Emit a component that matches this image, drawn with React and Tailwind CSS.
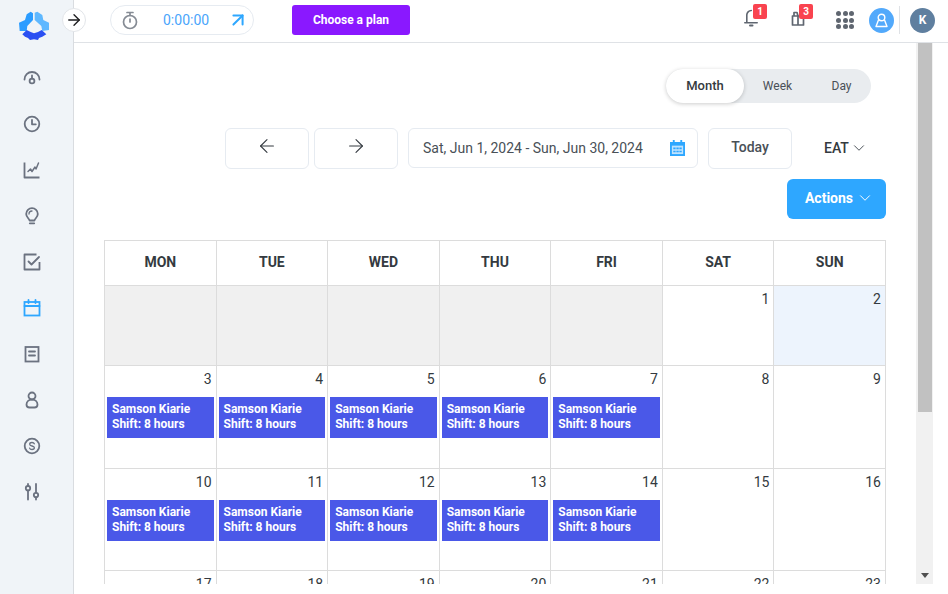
import React from "react";
import { ArrowRight, ArrowLeft, ArrowUpRight, ChevronDown } from "lucide-react";

const sideStroke = "#6b7280";

// SIDEBAR ICONS
const Svg = ({ children, color = sideStroke, size = 18 }) => (
  <svg width={size} height={size} viewBox="0 0 18 18" fill="none" stroke={color} strokeWidth="1.8" strokeLinecap="round" strokeLinejoin="round">
    {children}
  </svg>
);

const sideIcons = [
  <Svg key="gauge">
    <path d="M1.5 10.500A7.500 7.500 0 0 1 16.500 10.500" />
    <path d="M9 6.500v3" />
    <circle cx="9" cy="12" r="2.400" />
  </Svg>,
  <Svg key="clock">
    <circle cx="9" cy="9" r="7.300" />
    <path d="M9 5v4.300h3.800" />
  </Svg>,
  <Svg key="chart">
    <path d="M1.500 1.500v15h15" strokeLinecap="butt" />
    <path d="M5 10.500l2.500-2.500 1.500 2.500 3-4.500 1 2L15.500 2" strokeWidth="1.500" />
  </Svg>,
  <Svg key="bulb">
    <path d="M6.500 13.500C6.300 11.500 3.200 10.500 3.200 7a5.800 5.800 0 0 1 11.600 0c0 3.500-3.100 4.500-3.300 6.500z" />
    <path d="M6.800 16.300h4.400" />
    <path d="M6 7a3 3 0 0 1 3-3" strokeWidth="1.300" />
  </Svg>,
  <Svg key="check">
    <path d="M16.500 9v7.500H1.500V1.500h12" strokeLinecap="butt" />
    <path d="M5.500 8.500l3 3L16 4" />
  </Svg>,
  <Svg key="cal" color="#2ea7ff">
    <rect x="1.500" y="3" width="15" height="13.500" strokeLinejoin="miter" />
    <path d="M1.500 7h15M5.500 1v3M12.500 1v3" />
  </Svg>,
  <Svg key="doc">
    <rect x="2.500" y="2" width="13" height="14.500" strokeLinejoin="miter" />
    <path d="M6 6.500h6M6 10.500h6" />
  </Svg>,
  <Svg key="user">
    <circle cx="9" cy="5" r="3.500" />
    <path d="M3.500 13.500c0-3 2.500-5 5.500-5s5.500 2 5.500 5c0 2-1.500 3-3 3h-5c-1.500 0-3-1-3-3z" />
  </Svg>,
  <Svg key="dollar">
    <circle cx="9" cy="9" r="7.300" />
    <path d="M11.300 6.800C11 5.900 10 5.500 9 5.500c-1.300 0-2.300.7-2.300 1.700 0 2.400 4.700 1.200 4.700 3.600 0 1-1 1.700-2.400 1.700-1.100 0-2.100-.5-2.400-1.400" strokeWidth="1.300" />
  </Svg>,
  <Svg key="sliders">
    <path d="M5 1v2M5 7.500v9M13 1v8.500M13 14.500v2" />
    <circle cx="5" cy="5.200" r="2.200" />
    <circle cx="13" cy="12" r="2.200" />
  </Svg>,
];

const Logo = () => (
  <svg width="30" height="30" viewBox="0 0 30 30">
    <path d="M11.700.7L14 2.300V9L8.300 15 7.700 20H.7L0 11.700 6 9 7.700 3.300z" fill="#2b9cff" />
    <path d="M15.700 1.700L18.300.7 23.300 4 24.300 9 30 11.700V19L23.300 20 22.300 15 15.700 9z" fill="#5fb8ff" />
    <path d="M3.300 23.300L7.700 19 11.700 21 15 22.300 19 21 22.700 19 27.300 23.300 23.300 25.700 20 27 19 29 15 28.300 11 29 9 27 6 25.700z" fill="#2a4ff2" />
  </svg>
);

// TOP BAR
const TopBar = () => (
  <div className="h-[43px] shrink-0 border-b border-[#dfe2e6] bg-white flex items-center pl-[36px] pr-[13px] pb-[2px]">
    <div className="w-[144px] h-[30px] rounded-full border border-[#e6ebf1] flex items-center pl-[11px] pr-[4px]">
      <svg width="16" height="19" viewBox="0 0 16 19" fill="none" stroke="#858b94" strokeWidth="1.700" strokeLinecap="round">
        <circle cx="8" cy="11" r="6.500" />
        <path d="M5 1.500h6M8 2v2.500M8 8v3" />
      </svg>
      <span className="ml-[25px] text-[14px] text-[#4aa5fb]">0:00:00</span>
      <ArrowUpRight size={22} strokeWidth={2.200} className="ml-auto text-[#2ea7ff]" />
    </div>
    <button className="ml-[38px] w-[118px] h-[30px] rounded-[3px] bg-[#8a18ff] text-white text-[12px] font-bold">
      Choose a plan
    </button>

    <div className="ml-auto flex items-center">
      <div className="relative w-[24px] h-[20px] mr-[23px] mb-[4px]">
        <svg width="14" height="20" viewBox="0 0 14 20" fill="none" stroke="#5f6670" strokeWidth="1.600" strokeLinecap="round" strokeLinejoin="round">
          <path d="M.8 14.800h12.400M2.800 14.800V7a4.500 4.500 0 0 1 4.500-4.500" />
          <path d="M6 17.500h2.500" strokeWidth="2" />
        </svg>
        <span className="absolute -top-[4px] left-[9px] w-[14px] h-[15px] rounded-[2px] bg-[#f9434f] text-white text-[10px] font-bold flex items-center justify-center">1</span>
      </div>
      <div className="relative w-[24px] h-[20px] mr-[21px] mb-[4px]">
        <svg width="14" height="20" viewBox="0 0 14 20" fill="none" stroke="#5f6670" strokeWidth="1.700" strokeLinejoin="round">
          <path d="M1.500 8h11v9h-11zM.8 8h12.400M7 8v9M3 8V4.500h3L7 8" />
        </svg>
        <span className="absolute -top-[4px] left-[8px] w-[14px] h-[15px] rounded-[2px] bg-[#f9434f] text-white text-[10px] font-bold flex items-center justify-center">3</span>
      </div>
      <div className="grid grid-cols-3 gap-x-[1.500px] gap-y-[1.500px] w-[18px] mr-[15px]">
        {Array.from({ length: 9 }).map((_, i) => (
          <span key={i} className="w-[5px] h-[5px] rounded-full bg-[#5f6670]" />
        ))}
      </div>
      <div className="w-[25px] h-[25px] rounded-full bg-[#52a9fb] flex items-center justify-center">
        <svg width="15" height="15" viewBox="0 0 15 15" fill="none" stroke="#fff" strokeWidth="1.400" strokeLinejoin="round">
          <circle cx="7.500" cy="4.500" r="3.300" />
          <path d="M4.500 7L2 13.500h11L10.500 7" />
        </svg>
      </div>
      <div className="w-px h-[28px] bg-[#dfe2e6] ml-[5px] mr-[10px]" />
      <div className="w-[25px] h-[25px] rounded-full bg-[#5f7f9f] text-white text-[12px] font-bold flex items-center justify-center">K</div>
    </div>
  </div>
);

// CALENDAR
const days = ["MON", "TUE", "WED", "THU", "FRI", "SAT", "SUN"];

const rows = [
  { height: "h-[80px]", cells: [null, null, null, null, null, 1, 2] },
  { height: "h-[103px]", cells: [3, 4, 5, 6, 7, 8, 9], shifts: 5 },
  { height: "h-[102px]", cells: [10, 11, 12, 13, 14, 15, 16], shifts: 5 },
  { height: "h-[80px]", cells: [17, 18, 19, 20, 21, 22, 23] },
];

const Calendar = () => (
  <div className="w-[782px] border-l border-t border-[#dcdcdc]">
    <div className="grid grid-cols-7">
      {days.map((d) => (
        <div key={d} className="h-[45px] border-r border-b border-[#dcdcdc] flex items-center justify-center pb-[1px] text-[14px] font-bold text-[#343a40]">
          {d}
        </div>
      ))}
    </div>
    {rows.map((row, r) => (
      <div key={r} className="grid grid-cols-7">
        {row.cells.map((n, i) => (
          <div
            key={i}
            className={`${row.height} border-r border-b border-[#dcdcdc] ${n === null ? "bg-[#f0f0f0]" : n === 2 ? "bg-[#edf4fd]" : "bg-white"}`}
          >
            {n !== null && (
              <div className="h-[31px] pt-[4px] pr-[4px] text-right text-[14px] leading-[18px] text-[#343a40]">{n}</div>
            )}
            {row.shifts > i && (
              <div className="mx-[2px] h-[41px] bg-[#4a58e8] text-white text-[12px] font-bold leading-[15px] pl-[5px] pt-[5px]">
                <div>Samson Kiarie</div>
                <div>Shift: 8 hours</div>
              </div>
            )}
          </div>
        ))}
      </div>
    ))}
  </div>
);

const App = () => {
  return (
    <div className="relative w-[948px] h-[594px] overflow-hidden flex bg-white font-['Roboto',sans-serif]">
      {/* SIDEBAR */}
      <div className="w-[74px] shrink-0 bg-[#f0f4f8] border-r border-[#d9dce0] flex flex-col items-center">
        <div className="mt-[11px] pr-[5px]">
          <Logo />
        </div>
        <div className="mt-[28px] flex flex-col items-center gap-[28px] pr-[9px]">
          {sideIcons}
        </div>
      </div>

      {/* TOGGLE */}
      <button className="absolute left-[62px] top-[8px] w-[24px] h-[24px] rounded-full bg-white border border-[#e2e5e9] flex items-center justify-center">
        <ArrowRight size={18} strokeWidth={1.800} className="text-[#1d1d1f]" />
      </button>

      <div className="flex-1 flex flex-col min-w-0">
        <TopBar />

        <div className="h-[541px] flex">
          {/* CONTENT */}
          <div className="w-[842px] overflow-hidden pl-[30px] pr-[30px] pt-[26px]">
            <div className="flex justify-end pr-[15px]">
              <div className="w-[205px] h-[34px] rounded-full bg-[#e9ecef] flex items-center text-[12px] text-[#495057]">
                <div className="w-[78px] h-[34px] rounded-full bg-white shadow-[0_1px_4px_rgba(0,0,0,0.2)] flex items-center justify-center text-[13px] font-medium text-[#343a40]">
                  Month
                </div>
                <div className="w-[67px] text-center">Week</div>
                <div className="w-[60px] text-center pl-[1px]">Day</div>
              </div>
            </div>

            <div className="mt-[25px] flex items-start pl-[121px]">
              <button className="w-[84px] h-[41px] rounded-[6px] border border-[#e6ebf1] flex items-center justify-center pb-[5px]">
                <ArrowLeft size={22} strokeWidth={1.200} className="text-[#343a40]" />
              </button>
              <button className="ml-[5px] w-[84px] h-[41px] rounded-[6px] border border-[#e6ebf1] flex items-center justify-center pb-[5px]">
                <ArrowRight size={22} strokeWidth={1.200} className="text-[#343a40]" />
              </button>
              <div className="ml-[10px] w-[290px] h-[40px] rounded-[6px] border border-[#e6ebf1] flex items-center pl-[14px] pr-[12px] text-[14px] text-[#495057]">
                <span>Sat, Jun 1, 2024 - Sun, Jun 30, 2024</span>
                <svg className="ml-auto" width="15" height="16" viewBox="0 0 16 17">
                  <path d="M3 0h2v2h6V0h2v2h3v15H0V2h3z" fill="#2ea7ff" />
                  <path d="M2 6h12v9H2z" fill="#bfe3ff" />
                  <path d="M3.500 8h2.500v1.700H3.500zM6.800 8h2.500v1.700H6.800zM10 8h2.500v1.700H10zM3.500 11.300h2.500V13H3.500zM6.800 11.300h2.500V13H6.800zM10 11.300h2.500V13H10z" fill="#2ea7ff" />
                </svg>
              </div>
              <button className="ml-[10px] w-[84px] h-[41px] rounded-[6px] border border-[#e6ebf1] text-[14px] font-medium text-[#495057] pb-[2px]">
                Today
              </button>
              <div className="ml-[32px] h-[40px] flex items-center gap-[1px] text-[14px] font-medium text-[#343a40]">
                EAT
                <ChevronDown size={18} strokeWidth={1.300} className="text-[#495057]" />
              </div>
            </div>

            <div className="mt-[10px] flex justify-end">
              <button className="w-[99px] h-[40px] rounded-[6px] bg-[#2ea7ff] text-white text-[14px] font-bold flex items-center justify-center gap-[3px] pb-[2px] pl-[6px]">
                Actions
                <ChevronDown size={18} strokeWidth={1.300} />
              </button>
            </div>

            <div className="mt-[21px]">
              <Calendar />
            </div>
          </div>

          {/* SCROLLBAR */}
          <div className="w-[17px] h-full bg-[#f1f1f1] flex flex-col items-center">
            <div className="w-[14px] h-[369px] bg-[#c1c1c1]" />
            <div className="mt-auto mb-[6px] w-0 h-0 border-l-[4px] border-r-[4px] border-t-[5px] border-l-transparent border-r-transparent border-t-[#505050]" />
          </div>
        </div>
      </div>
    </div>
  );
};

export default App;
